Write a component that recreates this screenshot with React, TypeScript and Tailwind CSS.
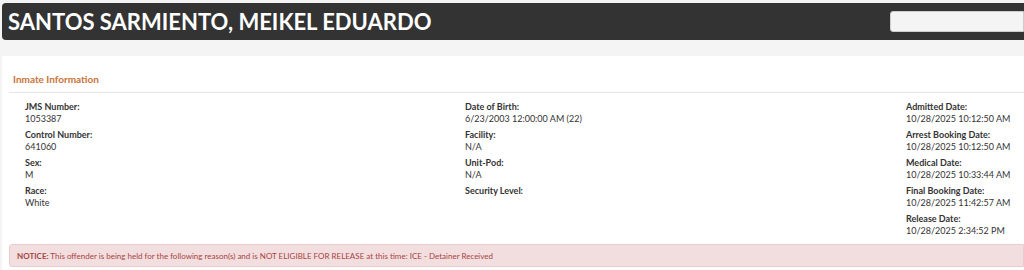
import React from "react";

const Field = ({ label, value }: { label: string; value?: string }) => (
  <div className="flex flex-col">
    <div className="text-[9px] leading-[12px] font-bold text-[#333]">{label}</div>
    {value !== undefined && <div className="text-[9px] leading-[12px] text-[#333]">{value}</div>}
  </div>
);

export default function App() {
  return (
    <div className="h-[270px] overflow-hidden bg-[#f4f4f4] pt-[3px] font-['Lato','Liberation_Sans',sans-serif]">
      <div className="ml-[2px] flex h-[37px] items-center justify-between rounded-l-[4px] bg-[#333] pl-[6px]">
        <h1 className="text-[22px] font-bold leading-none text-white">SANTOS SARMIENTO, MEIKEL EDUARDO</h1>
        <div className="h-[21px] w-[134px] rounded-l-[3px] border border-[#ccc] bg-[#f4f4f4]" />
      </div>
      <div className="ml-[2px] mt-[16px] h-[300px] bg-white pt-[16px]">
        <div className="ml-[7px] border-b border-[#e6e6e6] pb-[6px] pl-[4px] text-[10px] font-bold leading-[14px] text-[#c8733a]">
          Inmate Information
        </div>
        <div className="grid grid-cols-[440px_441px_1fr] pl-[23px] pt-[8px]">
          <div className="flex flex-col gap-[4px]">
            <Field label="JMS Number:" value="1053387" />
            <Field label="Control Number:" value="641060" />
            <Field label="Sex:" value="M" />
            <Field label="Race:" value="White" />
          </div>
          <div className="flex flex-col gap-[4px]">
            <Field label="Date of Birth:" value="6/23/2003 12:00:00 AM (22)" />
            <Field label="Facility:" value="N/A" />
            <Field label="Unit-Pod:" value="N/A" />
            <Field label="Security Level:" />
          </div>
          <div className="flex flex-col gap-[4px]">
            <Field label="Admitted Date:" value="10/28/2025 10:12:50 AM" />
            <Field label="Arrest Booking Date:" value="10/28/2025 10:12:50 AM" />
            <Field label="Medical Date:" value="10/28/2025 10:33:44 AM" />
            <Field label="Final Booking Date:" value="10/28/2025 11:42:57 AM" />
            <Field label="Release Date:" value="10/28/2025 2:34:52 PM" />
          </div>
        </div>
        <div className="ml-[7px] mt-[7px] flex h-[23px] items-center rounded-l-[3px] border border-[#ebccd1] bg-[#f2dede] pl-[7px] text-[8px] text-[#a94442]">
          <span className="font-bold">NOTICE:</span>
          <span>&nbsp;This offender is being held for the following reason(s) and is NOT ELIGIBLE FOR RELEASE at this time: ICE - Detainer Received</span>
        </div>
      </div>
    </div>
  );
}
